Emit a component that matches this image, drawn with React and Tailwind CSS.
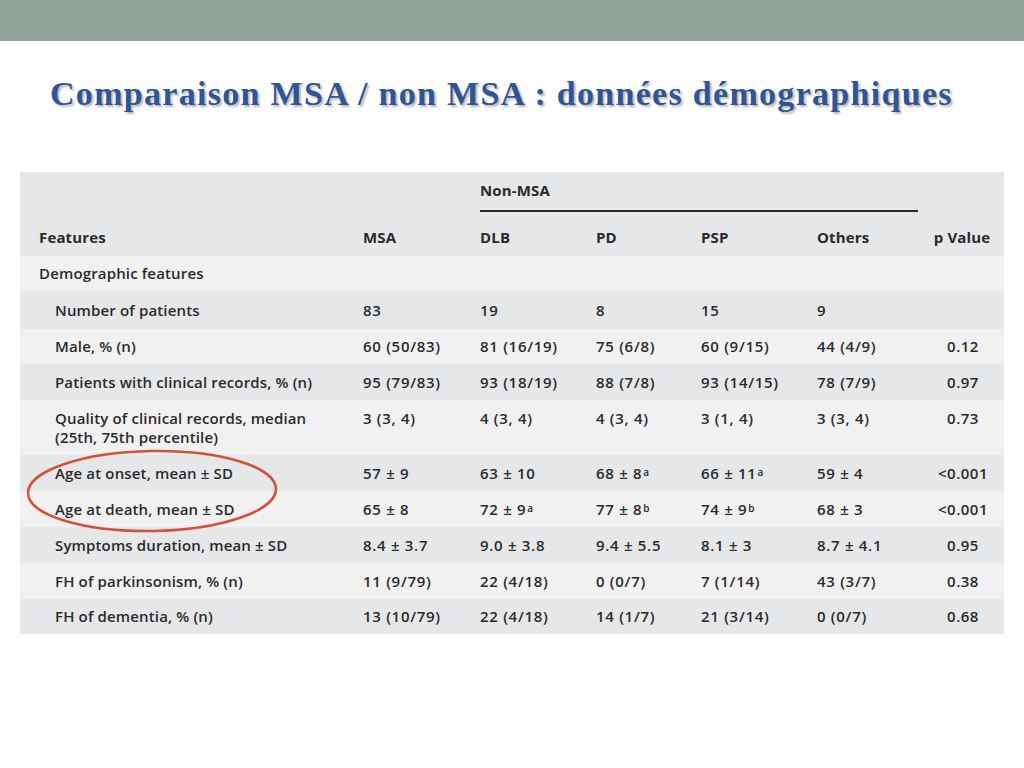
import React from "react";

const GRID = "grid grid-cols-[343px_117px_116px_105px_116px_105px_82px]";

const rows = [
  { label: "Number of patients", v: ["83", "19", "8", "15", "9", ""], bg: "bg-[#e6e7e8]", h: "h-[38px]" },
  { label: "Male, % (n)", v: ["60 (50/83)", "81 (16/19)", "75 (6/8)", "60 (9/15)", "44 (4/9)", "0.12"], bg: "bg-[#f1f1f2]", h: "h-[35px]" },
  { label: "Patients with clinical records, % (n)", v: ["95 (79/83)", "93 (18/19)", "88 (7/8)", "93 (14/15)", "78 (7/9)", "0.97"], bg: "bg-[#e6e7e8]", h: "h-[36px]" },
  { label: "Quality", v: ["3 (3, 4)", "4 (3, 4)", "4 (3, 4)", "3 (1, 4)", "3 (3, 4)", "0.73"], bg: "bg-[#f1f1f2]", h: "h-[55px]", top: true },
  { label: "Age at onset, mean ± SD", v: ["57 ± 9", "63 ± 10", ["68 ± 8", "a"], ["66 ± 11", "a"], "59 ± 4", "<0.001"], bg: "bg-[#e6e7e8]", h: "h-[36px]" },
  { label: "Age at death, mean ± SD", v: ["65 ± 8", ["72 ± 9", "a"], ["77 ± 8", "b"], ["74 ± 9", "b"], "68 ± 3", "<0.001"], bg: "bg-[#f1f1f2]", h: "h-[36px]" },
  { label: "Symptoms duration, mean ± SD", v: ["8.4 ± 3.7", "9.0 ± 3.8", "9.4 ± 5.5", "8.1 ± 3", "8.7 ± 4.1", "0.95"], bg: "bg-[#e6e7e8]", h: "h-[36px]" },
  { label: "FH of parkinsonism, % (n)", v: ["11 (9/79)", "22 (4/18)", "0 (0/7)", "7 (1/14)", "43 (3/7)", "0.38"], bg: "bg-[#f1f1f2]", h: "h-[36px]" },
  { label: "FH of dementia, % (n)", v: ["13 (10/79)", "22 (4/18)", "14 (1/7)", "21 (3/14)", "0 (0/7)", "0.68"], bg: "bg-[#e6e7e8]", h: "h-[35px]" },
];

function Val({ v }) {
  if (Array.isArray(v)) {
    return (
      <span>
        {v[0]}
        <sup className="text-[10px] relative top-[-3px] ml-[1px]">{v[1]}</sup>
      </span>
    );
  }
  return <span>{v}</span>;
}

export default function App() {
  return (
    <div className="w-[1024px] h-[768px] bg-white overflow-hidden">
      <div className="h-[41px] bg-[#93a399]" />
      <h1 className="mt-[33px] ml-[50px] h-[40px] leading-[40px] text-[34px] tracking-[1.3px] font-bold text-[#2f5597] [font-family:'Liberation_Serif',serif] [text-shadow:2px_2px_2px_rgba(0,0,0,0.28)] whitespace-nowrap">
        Comparaison MSA / non MSA : données démographiques
      </h1>
      <div className="relative mt-[58px] ml-[20px] w-[984px] text-[15px] leading-[19px] font-semibold text-[#2b2a2a] [font-family:'Open_Sans',sans-serif] tracking-[0.15px]">
        {/* header */}
        <div className="bg-[#e6e7e8] h-[84px]">
          <div className={`${GRID} h-[40px]`}>
            <div />
            <div />
            <div className="col-span-4 mr-[4px] pt-[9px] border-b-2 border-[#2a2a2a] font-bold">Non-MSA</div>
            <div />
          </div>
          <div className={`${GRID} pt-[16px] font-bold`}>
            <div className="pl-[19px]">Features</div>
            <div>MSA</div>
            <div>DLB</div>
            <div>PD</div>
            <div>PSP</div>
            <div>Others</div>
            <div className="text-center pr-[2px]">p Value</div>
          </div>
        </div>
        <div className="bg-[#f1f1f2] h-[35px] flex items-center pl-[19px]">Demographic features</div>
        {rows.map((r, i) => (
          <div key={i} className={`${GRID} ${r.bg} ${r.h} ${r.top ? "items-start pt-[9px]" : "items-center"}`}>
            <div className="pl-[35px]">
              {r.label === "Quality" ? (
                <>
                  Quality of clinical records, median
                  <br />
                  (25th, 75th percentile)
                </>
              ) : (
                r.label
              )}
            </div>
            {r.v.slice(0, 5).map((v, j) => (
              <div key={j} className="whitespace-nowrap tracking-[0.7px]">
                <Val v={v} />
              </div>
            ))}
            <div className="text-center tracking-[0.5px]">{r.v[5]}</div>
          </div>
        ))}
        <svg className="absolute left-0 top-0 pointer-events-none" width="300" height="400" style={{ overflow: "visible" }}>
          <ellipse cx="132" cy="319" rx="124" ry="40" fill="none" stroke="#d5503a" strokeWidth="2.5" transform="rotate(-1 132 319)" />
        </svg>
      </div>
    </div>
  );
}
